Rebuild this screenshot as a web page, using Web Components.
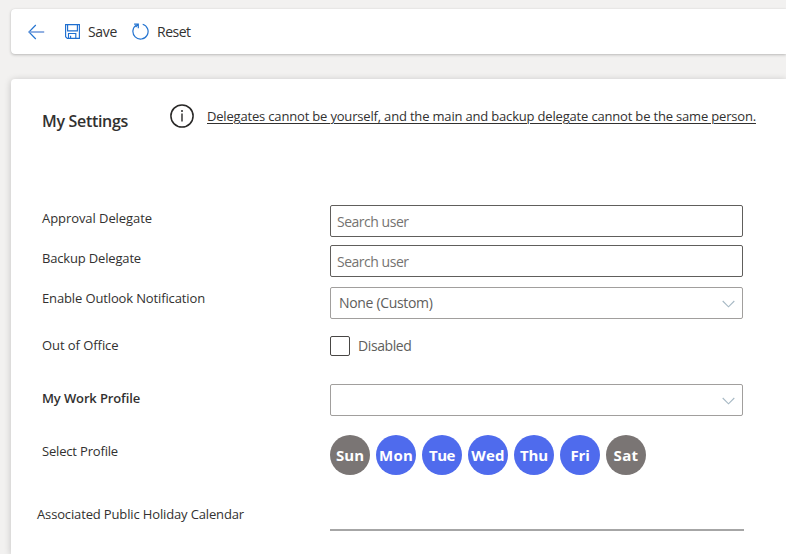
<!DOCTYPE html>
<html lang="en">
<head>
<meta charset="utf-8">
<title>My Settings</title>
<style>
html,body{margin:0;height:100%;overflow:hidden}
body{background:#f2f1f0;font-family:"Open Sans","Noto Sans",sans-serif;font-size:13px;color:#323130}
</style>
</head>
<body>
<settings-page></settings-page>
<script>
const define = (name, html, setup) => customElements.define(name, class extends HTMLElement {
  connectedCallback() {
    if (this.shadowRoot) return;
    const root = this.attachShadow({ mode: 'open' });
    const t = document.createElement('template');
    t.innerHTML = html;
    root.append(t.content.cloneNode(true));
    if (setup) setup(this, root);
  }
});

/* Single line of text whose tracking is adjusted to fill the given width. */
define('ui-text', `<style>
  :host{display:inline-block;white-space:nowrap;line-height:20px;flex:none}
</style><slot></slot>`, el => {
  const w = +el.getAttribute('width');
  const n = el.textContent.length;
  if (w && n) {
    const range = document.createRange();
    range.selectNodeContents(el);
    const now = range.getBoundingClientRect().width;
    el.style.letterSpacing = ((w - now) / n).toFixed(3) + 'px';
  }
});

define('tool-button', `<style>
  :host{display:flex;align-items:center;gap:8px;font-size:14px;flex:none}
  ::slotted(svg){display:block;flex:none}
</style><slot name="icon"></slot><slot></slot>`);

define('tool-bar', `<style>
  :host{display:flex;align-items:center;box-sizing:border-box;height:45px;margin:9px 0 0 11px;padding-left:17px;
    background:#fff;border-radius:4px 0 0 4px;box-shadow:0 1px 3px rgba(0,0,0,.23),0 0 1px rgba(0,0,0,.1)}
  svg{display:block}
  .save{margin-left:20px}.reset{margin-left:15px}
</style>
<tool-button><svg slot="icon" width="17" height="16" viewBox="0 0 17 16" fill="none" stroke="#2373d0" stroke-width="1.15"><path d="M7.8 1 .9 8l6.9 7"/><path d="M1 8h15.2" stroke="#6d96d8" stroke-width="1.5"/></svg></tool-button>
<tool-button class="save"><svg slot="icon" width="15" height="15" viewBox="0 0 15 15" fill="none" stroke="#1f6fd0" stroke-width="1.15"><path d="M.6.6h13.8v13.8H2.3L.6 12.7z"/><path d="M2.6.8v6h9.8v-6M3.5 14.2V9.5h7.3v4.7M5.6 14v-2.3"/></svg><ui-text width="29">Save</ui-text></tool-button>
<tool-button class="reset"><svg slot="icon" width="17" height="17" viewBox="0 0 17 17" fill="none" stroke="#2373d0" stroke-width="1.2"><path d="M10.7 1.2a7.6 7.6 0 1 1-6.2.8"/><path d="M2.1 1.1h4.2v4.1M6.1 1.3 3.6 4"/></svg><ui-text width="33.5">Reset</ui-text></tool-button>`);

define('info-note', `<style>
  :host{display:flex;align-items:center;gap:13px;height:24px}
  svg{display:block;flex:none}
  ::slotted(ui-text){text-decoration:underline;text-underline-offset:2px;text-decoration-thickness:1px}
</style>
<svg width="24" height="24" viewBox="0 0 24 24"><circle cx="12" cy="12" r="11.1" fill="none" stroke="#292827" stroke-width="1.5"/><path d="M12 9.5v8" stroke="#292827" stroke-width="1.4"/><circle cx="12" cy="7" r="1" fill="#292827"/></svg>
<slot></slot>`);

define('form-row', `<style>
  :host{display:grid;grid-template-columns:288px 414px;align-items:start;height:var(--h)}
  .label{margin-top:var(--dy);display:flex}
</style><div class="label"><slot name="label"></slot></div><slot></slot>`);

define('text-field', `<style>
  :host{display:flex;align-items:center;box-sizing:border-box;width:413px;height:32px;padding:2px 6px 0;
    border:1px solid #605e5c;border-radius:2px;color:#757371;font-size:14px}
</style><slot></slot>`);

define('drop-down', `<style>
  :host{display:flex;align-items:center;justify-content:space-between;box-sizing:border-box;width:413px;height:32px;
    padding:0 7px 0 8px;border:1px solid #a19f9d;border-radius:2px;color:#605e5c;font-size:14px}
  svg{display:block;flex:none;margin-top:2px}
</style><span><slot></slot></span>
<svg width="13" height="8" viewBox="0 0 13 8" fill="none" stroke="#a6b8c4" stroke-width="1.1"><path d="m.7 1 5.8 5.8L12.3 1"/></svg>`);

define('check-box', `<style>
  :host{display:flex;align-items:center;gap:8px;height:20px;color:#605e5c;font-size:14px}
  i{box-sizing:border-box;width:20px;height:20px;border:1px solid #484644;border-radius:2px}
</style><i></i><slot></slot>`);

define('day-dot', `<style>
  :host{display:flex;align-items:center;justify-content:center;width:40px;height:40px;border-radius:50%;
    background:#4f6bed;color:#fff;font-size:15px;font-weight:700}
  :host([off]){background:#7a7574}
</style><slot></slot>`);

define('day-picker', `<style>:host{display:flex;gap:6px}</style><slot></slot>`);

define('line-field', `<style>:host{display:block;box-sizing:border-box;height:31px;width:414px;border-bottom:2px solid #a6a6a6}</style>`);

define('settings-card', `<style>
  :host{display:flex;flex-direction:column;flex:1;margin:25px 0 0 11px;padding:25px 0 0 31px;background:#fff;border-radius:4px 0 0 0;
    box-shadow:0 1px 7px rgba(0,0,0,.2)}
</style><slot></slot>`);

define('settings-page', `<style>
  :host{display:flex;flex-direction:column;width:100%;height:100%;overflow:hidden}
  header{display:flex;height:101px;align-items:flex-start}
  h1{margin:7px 0 0;width:128px;font-size:16px;font-weight:600;line-height:20px;display:flex}
  .strong{font-weight:600}
  .wide{margin-left:-5px}
</style>
<tool-bar></tool-bar>
<settings-card>
  <header><h1><ui-text width="86">My Settings</ui-text></h1><info-note><ui-text width="549">Delegates cannot be yourself, and the main and backup delegate cannot be the same person.</ui-text></info-note></header>
  <form-row style="--h:40px;--dy:3px"><ui-text slot="label" width="110">Approval Delegate</ui-text><text-field><ui-text width="71.5">Search user</ui-text></text-field></form-row>
  <form-row style="--h:42px;--dy:3px"><ui-text slot="label" width="99">Backup Delegate</ui-text><text-field><ui-text width="71.5">Search user</ui-text></text-field></form-row>
  <form-row style="--h:49px;--dy:1px"><ui-text slot="label" width="163">Enable Outlook Notification</ui-text><drop-down><ui-text width="93.5">None (Custom)</ui-text></drop-down></form-row>
  <form-row style="--h:48px;--dy:-1px"><ui-text slot="label" width="76.5">Out of Office</ui-text><check-box><ui-text width="53.5">Disabled</ui-text></check-box></form-row>
  <form-row style="--h:51px;--dy:4px"><ui-text slot="label" class="strong" width="98">My Work Profile</ui-text><drop-down></drop-down></form-row>
  <form-row style="--h:65px;--dy:6px"><ui-text slot="label" width="76">Select Profile</ui-text>
    <day-picker><day-dot off><ui-text width="28">Sun</ui-text></day-dot><day-dot><ui-text width="34">Mon</ui-text></day-dot><day-dot><ui-text width="26">Tue</ui-text></day-dot><day-dot><ui-text width="33.5">Wed</ui-text></day-dot><day-dot><ui-text width="28">Thu</ui-text></day-dot><day-dot><ui-text width="19">Fri</ui-text></day-dot><day-dot off><ui-text width="25">Sat</ui-text></day-dot></day-picker></form-row>
  <form-row style="--h:40px;--dy:4px"><ui-text slot="label" class="wide" width="207">Associated Public Holiday Calendar</ui-text><line-field></line-field></form-row>
</settings-card>`);
</script>
</body>
</html>
